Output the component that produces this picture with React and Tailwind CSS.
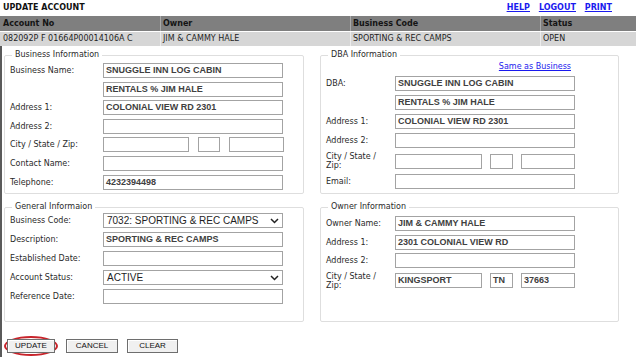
import React from 'react';

const inputFont = "font-['Liberation_Sans',Arial,sans-serif]";

const TextBox = ({ value = '', className = 'w-[180px]' }) => (
  <div
    className={`${className} ${inputFont} flex h-[15px] shrink-0 items-center overflow-hidden whitespace-nowrap border border-[#a3a3a3] bg-white px-[2px] text-[9px] font-bold leading-none text-[#404040]`}
  >
    {value}
  </div>
);

const SelectBox = ({ value }) => (
  <div className={`${inputFont} flex h-[15px] w-[180px] shrink-0 items-center justify-between border border-[#a3a3a3] bg-white pl-[3px] pr-[3px] text-[10px] leading-none text-[#1e1e1e]`}>
    <span className="whitespace-nowrap">{value}</span>
    <svg width="9" height="6" viewBox="0 0 9 6" className="shrink-0">
      <polyline points="1,1 4.5,4.5 8,1" fill="none" stroke="#222" strokeWidth="1.5" />
    </svg>
  </div>
);

const Row = ({ label, labelClass, children }) => (
  <div className="flex items-center">
    <div className={`${labelClass} shrink-0 text-[8px] leading-[9px] text-[#2a2a2a]`}>{label}</div>
    {children}
  </div>
);

const Box = ({ title, className, children }) => (
  <fieldset className={`${className} rounded-[2px] border border-[#dedede] bg-white px-[5px]`}>
    <legend className="ml-[2px] px-[3px] text-[8px] leading-[10px] text-[#2a2a2a]">{title}</legend>
    {children}
  </fieldset>
);

const Btn = ({ children, className }) => (
  <button className={`${className} ${inputFont} h-[14px] border border-[#6e6e6e] bg-[#f0f0f0] text-[8px] leading-none text-[#111] shadow-[inset_1px_1px_0_#ffffff]`}>
    {children}
  </button>
);

const L = 'w-[93px]';
const R = 'w-[69px] pr-[8px]';

export default function App() {
  return (
    <div className="h-[357px] w-[636px] overflow-hidden bg-white font-['DejaVu_Sans',Verdana,sans-serif] text-[#111]">
      <div className="flex h-[16px] items-center justify-between pl-[3px] pr-[24px]">
        <span className="text-[8px] font-bold">UPDATE ACCOUNT</span>
        <div className="flex gap-[9px] text-[8px] font-bold text-[#1a1aee] underline">
          <a href="#">HELP</a>
          <a href="#">LOGOUT</a>
          <a href="#">PRINT</a>
        </div>
      </div>

      <div className="grid grid-cols-[160px_190px_190px_96px] text-[8px]">
        <div className="flex h-[15px] items-center bg-[#7f7f7f] pl-[3px] font-bold text-[#141414]">Account No</div>
        <div className="flex h-[15px] items-center border-l border-[#a9a9a9] bg-[#7f7f7f] pl-[2px] font-bold text-[#141414]">Owner</div>
        <div className="flex h-[15px] items-center border-l border-[#a9a9a9] bg-[#7f7f7f] pl-[2px] font-bold text-[#141414]">Business Code</div>
        <div className="flex h-[15px] items-center border-l border-[#a9a9a9] bg-[#7f7f7f] pl-[2px] font-bold text-[#141414]">Status</div>
        <div className="mt-[1px] flex h-[14px] items-center bg-[#d6d6d6] pl-[3px] text-[#1e1e1e]">082092P F 01664P00014106A C</div>
        <div className="mt-[1px] flex h-[14px] items-center border-l border-[#ececec] bg-[#d6d6d6] pl-[2px] text-[#1e1e1e]">JIM &amp; CAMMY HALE</div>
        <div className="mt-[1px] flex h-[14px] items-center border-l border-[#ececec] bg-[#d6d6d6] pl-[2px] text-[#1e1e1e]">SPORTING &amp; REC CAMPS</div>
        <div className="mt-[1px] flex h-[14px] items-center border-l border-[#ececec] bg-[#d6d6d6] pl-[2px] text-[#1e1e1e]">OPEN</div>
      </div>

      <div className="h-[311px] border-l-2 border-[#5a5a5a] pl-[2px] pt-[4px]">
        <div className="grid grid-cols-[300px_299px] gap-x-[16px] gap-y-[8px]">
          <Box title="Business Information" className="h-[144px]">
            <div className="flex flex-col gap-[3.6px] pt-[3px]">
              <Row label="Business Name:" labelClass={L}><TextBox value="SNUGGLE INN LOG CABIN" /></Row>
              <Row label="" labelClass={L}><TextBox value="RENTALS % JIM HALE" /></Row>
              <Row label="Address 1:" labelClass={L}><TextBox value="COLONIAL VIEW RD 2301" /></Row>
              <Row label="Address 2:" labelClass={L}><TextBox /></Row>
              <Row label="City / State / Zip:" labelClass={L}>
                <div className="flex gap-[9px]">
                  <TextBox className="w-[86px]" />
                  <TextBox className="w-[22px]" />
                  <TextBox className="w-[55px]" />
                </div>
              </Row>
              <Row label="Contact Name:" labelClass={L}><TextBox /></Row>
              <Row label="Telephone:" labelClass={L}><TextBox value="4232394498" /></Row>
            </div>
          </Box>

          <Box title="DBA Information" className="h-[144px]">
            <div className="flex flex-col gap-[4px] pt-[2px]">
              <div className="flex h-[10px] w-[249px] items-center justify-end pr-[4px]">
                <a href="#" className="text-[8px] text-[#1a1aee] underline">Same as Business</a>
              </div>
              <Row label="DBA:" labelClass={R}><TextBox value="SNUGGLE INN LOG CABIN" /></Row>
              <Row label="" labelClass={R}><TextBox value="RENTALS % JIM HALE" /></Row>
              <Row label="Address 1:" labelClass={R}><TextBox value="COLONIAL VIEW RD 2301" /></Row>
              <Row label="Address 2:" labelClass={R}><TextBox /></Row>
              <Row label="City / State / Zip:" labelClass={R}>
                <div className="flex gap-[8px]">
                  <TextBox className="w-[87px]" />
                  <TextBox className="w-[23px]" />
                  <TextBox className="w-[54px]" />
                </div>
              </Row>
              <Row label="Email:" labelClass={R}><TextBox /></Row>
            </div>
          </Box>

          <Box title="General Informaion" className="h-[120px]">
            <div className="flex flex-col gap-[4px] pt-[1px]">
              <Row label="Business Code:" labelClass={L}><SelectBox value="7032: SPORTING & REC CAMPS" /></Row>
              <Row label="Description:" labelClass={L}><TextBox value="SPORTING & REC CAMPS" /></Row>
              <Row label="Established Date:" labelClass={L}><TextBox /></Row>
              <Row label="Account Status:" labelClass={L}><SelectBox value="ACTIVE" /></Row>
              <Row label="Reference Date:" labelClass={L}><TextBox /></Row>
            </div>
          </Box>

          <Box title="Owner Information" className="h-[120px]">
            <div className="flex flex-col gap-[3.6px] pt-[4px]">
              <Row label="Owner Name:" labelClass={R}><TextBox value="JIM & CAMMY HALE" /></Row>
              <Row label="Address 1:" labelClass={R}><TextBox value="2301 COLONIAL VIEW RD" /></Row>
              <Row label="Address 2:" labelClass={R}><TextBox /></Row>
              <Row label="City / State / Zip:" labelClass={R}>
                <div className="flex gap-[8px]">
                  <TextBox className="w-[87px]" value="KINGSPORT" />
                  <TextBox className="w-[23px]" value="TN" />
                  <TextBox className="w-[54px]" value="37663" />
                </div>
              </Row>
            </div>
          </Box>
        </div>

        <div className="mt-[14px] flex items-center">
          <span className="rounded-[50%] border-2 border-[#c8242b] px-[1px] py-[1px]">
            <Btn className="block w-[48px]">UPDATE</Btn>
          </span>
          <Btn className="ml-[8px] w-[52px]">CANCEL</Btn>
          <Btn className="ml-[9px] w-[51px]">CLEAR</Btn>
        </div>
      </div>
    </div>
  );
}
